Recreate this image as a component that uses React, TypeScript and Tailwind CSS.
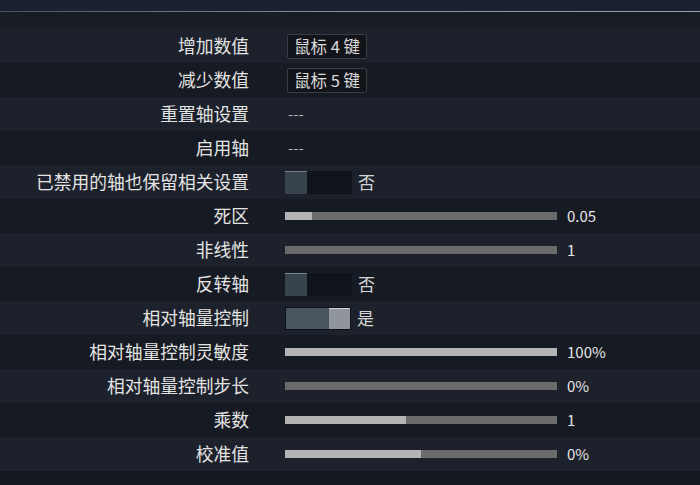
import React from "react";

type Row =
  | { label: string; kind: "key"; value: string }
  | { label: string; kind: "dash" }
  | { label: string; kind: "toggle"; on: boolean }
  | { label: string; kind: "slider"; fill: number; value: string };

const rows: Row[] = [
  { label: "增加数值", kind: "key", value: "鼠标 4 键" },
  { label: "减少数值", kind: "key", value: "鼠标 5 键" },
  { label: "重置轴设置", kind: "dash" },
  { label: "启用轴", kind: "dash" },
  { label: "已禁用的轴也保留相关设置", kind: "toggle", on: false },
  { label: "死区", kind: "slider", fill: 10, value: "0.05" },
  { label: "非线性", kind: "slider", fill: 0, value: "1" },
  { label: "反转轴", kind: "toggle", on: false },
  { label: "相对轴量控制", kind: "toggle", on: true },
  { label: "相对轴量控制灵敏度", kind: "slider", fill: 100, value: "100%" },
  { label: "相对轴量控制步长", kind: "slider", fill: 0, value: "0%" },
  { label: "乘数", kind: "slider", fill: 44.5, value: "1" },
  { label: "校准值", kind: "slider", fill: 50, value: "0%" },
];

const Toggle = ({ on }: { on: boolean }) => (
  <div className="flex items-center gap-[6px]">
    {on ? (
      <div className="flex h-[23px] w-[66px] bg-[#4a565e] border border-[#0d1016]">
        <div className="flex-1" />
        <div className="w-[21px] h-full bg-[#8f959b] border-t border-[#d0d4d8]" />
      </div>
    ) : (
      <div className="flex h-[23px] w-[67px] bg-[#0f131a]">
        <div className="w-[22px] h-full bg-[#38424a] border-t border-[#7a848c]" />
      </div>
    )}
    <span className="text-[17px] text-[#d4d4d4]">{on ? "是" : "否"}</span>
  </div>
);

const Slider = ({ fill, value }: { fill: number; value: string }) => (
  <div className="flex items-center gap-[10px]">
    <div className="h-[8px] w-[272px] bg-[#6b6b6b]">
      <div className="h-full bg-[#b4b4b4]" style={{ width: `${fill}%` }} />
    </div>
    <span className="text-[15px] text-[#e6e6e6]">{value}</span>
  </div>
);

export default function App() {
  return (
    <div
      className="w-[700px] h-[485px] overflow-hidden bg-[#141820] flex flex-col"
      style={{ fontFamily: '"Noto Sans CJK SC", "Noto Sans", sans-serif' }}
    >
      <div className="h-[11px] bg-[#1a2231]" />
      <div className="h-[1px] bg-gradient-to-r from-[#4a5260] via-[#8c9198] to-[#9aa0a6]" />
      <div className="h-[17px] bg-[#171c25]" />
      {rows.map((row, i) => (
        <div
          key={row.label}
          className={`flex items-center h-[34px] ${i % 2 === 0 ? "bg-[#1c212b]" : "bg-[#161a22]"}`}
        >
          <div className="w-[249px] text-right text-[17.75px] text-[#e4e4e4] leading-none">
            {row.label}
          </div>
          <div className="ml-[36px] flex items-center">
            {row.kind === "key" && (
              <div className="h-[25px] w-[80px] ml-[2px] flex items-center justify-center bg-[#121419] border border-[#3a3d42] rounded-[2px] text-[16.5px] text-[#dadada]">
                {row.value}
              </div>
            )}
            {row.kind === "dash" && (
              <span className="text-[15px] text-[#b0b0b0] ml-[3px]">---</span>
            )}
            {row.kind === "toggle" && <Toggle on={row.on} />}
            {row.kind === "slider" && <Slider fill={row.fill} value={row.value} />}
          </div>
        </div>
      ))}
      <div className="flex-1 bg-[#131720]" />
    </div>
  );
}
